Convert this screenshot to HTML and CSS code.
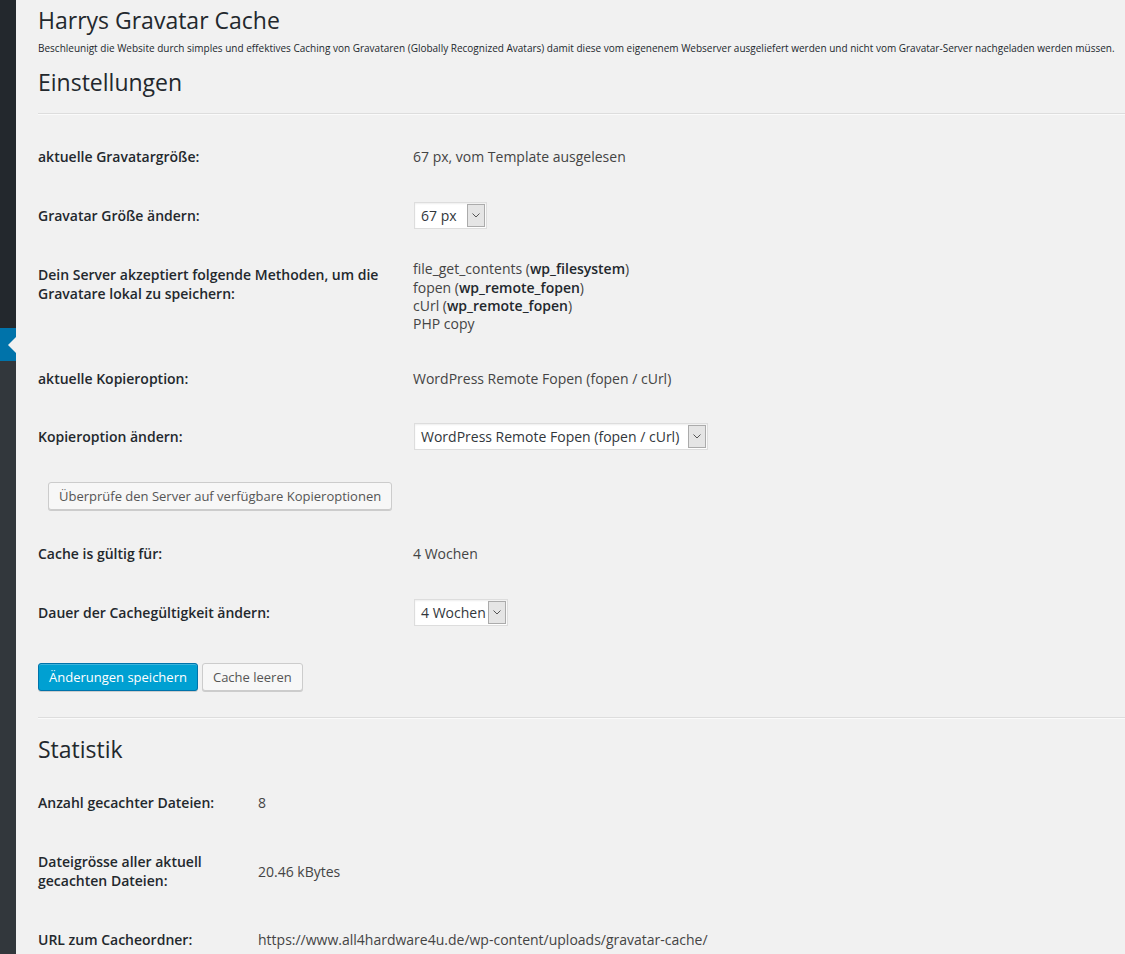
FILE: index.html
```html
<!DOCTYPE html>
<html lang="de">
<head>
<meta charset="utf-8">
<title>Harrys Gravatar Cache</title>
<link rel="stylesheet" href="styles.css">
</head>
<body>
<div class="layout">
  <aside class="sidebar">
    <div class="sb-top"></div>
    <div class="sb-current"><span class="sb-arrow"></span></div>
    <div class="sb-sub"></div>
  </aside>
  <main class="main">
    <h1 class="title">Harrys Gravatar Cache</h1>
    <p class="desc">Beschleunigt die Website durch simples und effektives Caching von Gravataren (Globally Recognized Avatars) damit diese vom eigenenem Webserver ausgeliefert werden und nicht vom Gravatar-Server nachgeladen werden müssen.</p>
    <h2 class="section">Einstellungen</h2>
    <hr class="divider">

    <div class="form">
      <div class="row">
        <div class="label">aktuelle Gravatargröße:</div>
        <div class="value">67 px, vom Template ausgelesen</div>
      </div>
      <div class="row">
        <div class="label">Gravatar Größe ändern:</div>
        <div class="value">
          <div class="select sel-size"><span class="sel-text">67 px</span><span class="sel-arrow"><svg width="8" height="5" viewBox="0 0 8 5"><path d="M0.5 0.5 L4 4 L7.5 0.5" fill="none" stroke="#555" stroke-width="1"/></svg></span></div>
        </div>
      </div>
      <div class="row row-tall">
        <div class="label">Dein Server akzeptiert folgende Methoden, um die Gravatare lokal zu speichern:</div>
        <div class="value methods">
          <div>file_get_contents (<b>wp_filesystem</b>)</div>
          <div>fopen (<b>wp_remote_fopen</b>)</div>
          <div>cUrl (<b>wp_remote_fopen</b>)</div>
          <div>PHP copy</div>
        </div>
      </div>
      <div class="row row-58">
        <div class="label">aktuelle Kopieroption:</div>
        <div class="value">WordPress Remote Fopen (fopen / cUrl)</div>
      </div>
      <div class="row row-58">
        <div class="label">Kopieroption ändern:</div>
        <div class="value">
          <div class="select sel-copy"><span class="sel-text">WordPress Remote Fopen (fopen / cUrl)</span><span class="sel-arrow"><svg width="8" height="5" viewBox="0 0 8 5"><path d="M0.5 0.5 L4 4 L7.5 0.5" fill="none" stroke="#555" stroke-width="1"/></svg></span></div>
        </div>
      </div>
      <div class="row-btn">
        <button class="btn">Überprüfe den Server auf verfügbare Kopieroptionen</button>
      </div>
      <div class="row">
        <div class="label">Cache is gültig für:</div>
        <div class="value">4 Wochen</div>
      </div>
      <div class="row">
        <div class="label">Dauer der Cachegültigkeit ändern:</div>
        <div class="value">
          <div class="select sel-weeks"><span class="sel-text">4 Wochen</span><span class="sel-arrow"><svg width="8" height="5" viewBox="0 0 8 5"><path d="M0.5 0.5 L4 4 L7.5 0.5" fill="none" stroke="#555" stroke-width="1"/></svg></span></div>
        </div>
      </div>
    </div>

    <div class="submit">
      <button class="btn btn-primary">Änderungen speichern</button>
      <button class="btn btn-cache">Cache leeren</button>
    </div>

    <hr class="divider divider-2">

    <h2 class="section section-stats">Statistik</h2>

    <div class="form stats">
      <div class="row">
        <div class="label">Anzahl gecachter Dateien:</div>
        <div class="value">8</div>
      </div>
      <div class="row">
        <div class="label">Dateigrösse aller aktuell gecachten Dateien:</div>
        <div class="value">20.46 kBytes</div>
      </div>
      <div class="row">
        <div class="label">URL zum Cacheordner:</div>
        <div class="value">https://www.all4hardware4u.de/wp-content/uploads/gravatar-cache/</div>
      </div>
    </div>
  </main>
</div>
</body>
</html>
```

FILE: styles.css
```css
html, body {
  margin: 0;
  padding: 0;
  background: #f1f1f1;
  height: 100%;
  overflow: hidden;
}
body {
  font-family: "Open Sans", "Noto Sans", sans-serif;
  font-size: 14px;
  color: #444;
}
.layout {
  display: flex;
  min-height: 954px;
}
.sidebar {
  width: 16px;
  flex: 0 0 16px;
  display: flex;
  flex-direction: column;
}
.sb-top {
  height: 328px;
  background: #23282d;
}
.sb-current {
  height: 33px;
  background: #0073aa;
  display: flex;
  align-items: center;
  justify-content: flex-end;
}
.sb-arrow {
  width: 0;
  height: 0;
  border-right: 8px solid #f1f1f1;
  border-top: 8px solid transparent;
  border-bottom: 8px solid transparent;
}
.sb-sub {
  flex: 1;
  background: #32373c;
}
.main {
  flex: 1;
  padding-left: 22px;
  min-width: 0;
}
.title {
  font-size: 23px;
  font-weight: 400;
  line-height: 30px;
  margin: 5px 0 0;
  color: #23282d;
}
.desc {
  font-size: 10px;
  line-height: 16px;
  margin: 5px 0 0;
  color: #23282d;
  white-space: nowrap;
}
.section {
  font-size: 23px;
  font-weight: 400;
  line-height: 30px;
  margin: 11px 0 0;
  color: #23282d;
}
.divider {
  border: 0;
  border-top: 1px solid #ddd;
  border-bottom: 1px solid #fafafa;
  margin: 16px 0 0;
  height: 0;
}
.form {
  margin-top: 12px;
}
.row {
  display: grid;
  grid-template-columns: 375px 1fr;
  min-height: 59px;
  align-items: center;
}
.row-58 {
  min-height: 58px;
}
.row-tall {
  min-height: 104px;
}
.label {
  align-self: start;
  padding-top: 20px;
  padding-right: 10px;
  font-weight: 600;
  line-height: 19px;
  color: #23282d;
}
.value {
  line-height: 19px;
}
.methods {
  line-height: 18.3px;
}
.methods b {
  font-weight: 600;
  color: #23282d;
}
.select {
  display: inline-flex;
  align-items: stretch;
  height: 27px;
  box-sizing: border-box;
  border: 1px solid #ddd;
  background: #fff;
  box-shadow: inset 0 1px 2px rgba(0,0,0,0.07);
  vertical-align: middle;
  margin-left: 1px;
}
.sel-text {
  padding-left: 6px;
  line-height: 25px;
  color: #32373c;
  flex: 1;
  white-space: nowrap;
}
.sel-arrow {
  width: 16px;
  margin: 1px;
  background: #e5e5e5;
  border: 1px solid #ababab;
  display: flex;
  align-items: center;
  justify-content: center;
}
.sel-size { width: 73px; }
.sel-copy { width: 294px; }
.sel-weeks { width: 94px; }
.row-btn {
  height: 59px;
  display: flex;
  align-items: center;
  padding-left: 10px;
  padding-top: 2px;
  box-sizing: border-box;
}
.btn {
  font-family: "Open Sans", "Noto Sans", sans-serif;
  font-size: 13px;
  height: 28px;
  line-height: 26px;
  padding: 0 10px 1px;
  border: 1px solid #ccc;
  border-radius: 3px;
  background: #f7f7f7;
  color: #555;
  box-shadow: 0 1px 0 #ccc;
  box-sizing: border-box;
  cursor: pointer;
  white-space: nowrap;
}
.submit {
  margin-top: 21px;
  display: flex;
  gap: 4px;
}
.btn-primary {
  background: #00a0d2;
  border-color: #0073aa;
  color: #fff;
  box-shadow: inset 0 1px 0 rgba(120,200,230,0.5), 0 1px 0 rgba(0,0,0,0.15);
}
.divider-2 {
  margin-top: 26px;
}
.section-stats {
  margin-top: 15px;
}
.stats {
  margin-top: 9px;
}
.stats .row {
  grid-template-columns: 220px 1fr;
}
.stats .label {
  padding-bottom: 20px;
}
```
